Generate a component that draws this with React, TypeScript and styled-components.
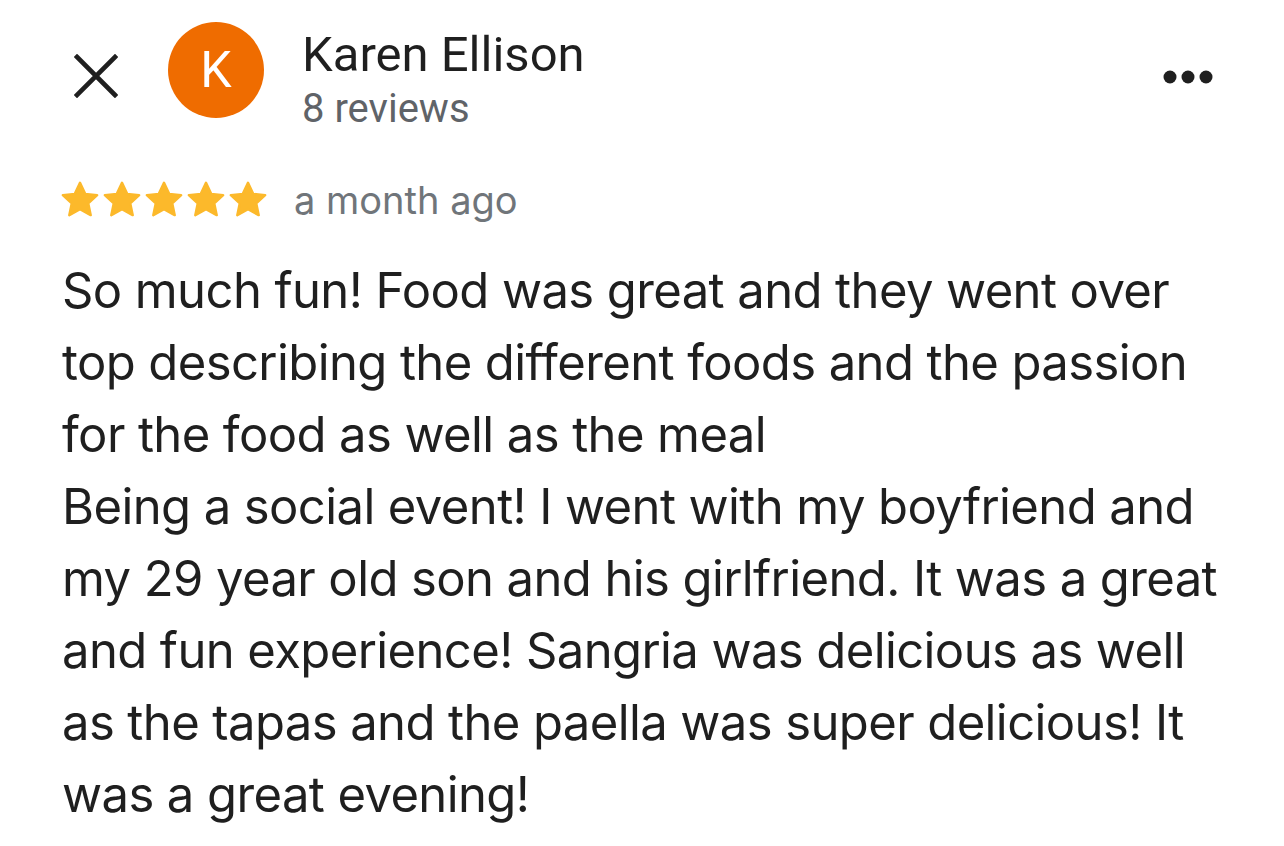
import React from "react";
import styled, { createGlobalStyle } from "styled-components";

const GlobalStyle = createGlobalStyle`
  html, body {
    margin: 0;
    padding: 0;
    background: #ffffff;
  }
  body {
    font-family: Inter, "Liberation Sans", sans-serif;
  }
`;

const STAR_COUNT = 5;

const Page = styled.div`
  width: 1284px;
  height: 846px;
  box-sizing: border-box;
  padding: 24px 40px 0 62px;
  overflow: hidden;
`;

const Header = styled.div`
  display: flex;
  align-items: flex-start;
`;

const CloseButton = styled.button`
  width: 48px;
  height: 48px;
  margin: 28px 0 0 10px;
  padding: 0;
  border: none;
  background: none;
  display: flex;
  align-items: center;
  justify-content: center;
`;

const Avatar = styled.div`
  width: 96px;
  height: 96px;
  border-radius: 50%;
  background: #ef6c00;
  color: #ffffff;
  font-family: Roboto, sans-serif;
  font-size: 50px;
  display: flex;
  align-items: center;
  justify-content: center;
  margin-left: 48px;
  margin-top: -2px;
  flex-shrink: 0;
`;

const Who = styled.div`
  display: flex;
  flex-direction: column;
  margin-left: 38px;
  font-family: Roboto, sans-serif;
`;

const Name = styled.div`
  font-size: 49px;
  line-height: 62px;
  color: #1f1f1f;
`;

const Count = styled.div`
  font-size: 40px;
  line-height: 46px;
  color: #5f6368;
`;

const MoreButton = styled.button`
  margin: 46px 31px 0 auto;
  padding: 0;
  border: none;
  background: none;
  display: flex;
`;

const RatingRow = styled.div`
  display: flex;
  align-items: center;
  margin-top: 45px;
`;

const Stars = styled.div`
  display: flex;
  margin-left: -3px;
`;

const When = styled.span`
  font-size: 38px;
  color: #70757a;
  margin-left: 25px;
`;

const Body = styled.p`
  margin: 32px 0 0 0;
  font-size: 49px;
  line-height: 72px;
  color: #1f1f1f;
  letter-spacing: -0.6px;
`;

const Star = () => (
  <svg width="42" height="42" viewBox="0 0 24 24">
    <path
      d="M12 2.2l2.95 6.3 6.85.75-5.1 4.65 1.42 6.75L12 17.2l-6.12 3.45 1.42-6.75-5.1-4.65 6.85-.75z"
      fill="#fcb92b"
      stroke="#fcb92b"
      strokeWidth="1.4"
      strokeLinejoin="round"
    />
  </svg>
);

export default function App() {
  return (
    <>
      <GlobalStyle />
      <Page>
        <Header>
          <CloseButton aria-label="Close">
            <svg width="44" height="44" viewBox="0 0 44 44">
              <path
                d="M3 3L41 41M41 3L3 41"
                stroke="#1f1f1f"
                strokeWidth="4.6"
                strokeLinecap="square"
              />
            </svg>
          </CloseButton>
          <Avatar>K</Avatar>
          <Who>
            <Name>Karen Ellison</Name>
            <Count>8 reviews</Count>
          </Who>
          <MoreButton aria-label="More">
            <svg width="50" height="14" viewBox="0 0 50 14">
              <circle cx="7" cy="7" r="6.5" fill="#1f1f1f" />
              <circle cx="25" cy="7" r="6.5" fill="#1f1f1f" />
              <circle cx="43" cy="7" r="6.5" fill="#1f1f1f" />
            </svg>
          </MoreButton>
        </Header>
        <RatingRow>
          <Stars>
            {Array.from({ length: STAR_COUNT }).map((_, i) => (
              <Star key={i} />
            ))}
          </Stars>
          <When>a month ago</When>
        </RatingRow>
        <Body>
          So much fun! Food was great and they went over top describing the
          different foods and the passion for the food as well as the meal
          <br />
          Being a social event! I went with my boyfriend and my 29 year old son
          and his girlfriend. It was a great and fun experience! Sangria was
          delicious as well as the tapas and the paella was super delicious! It
          was a great evening!
        </Body>
      </Page>
    </>
  );
}
